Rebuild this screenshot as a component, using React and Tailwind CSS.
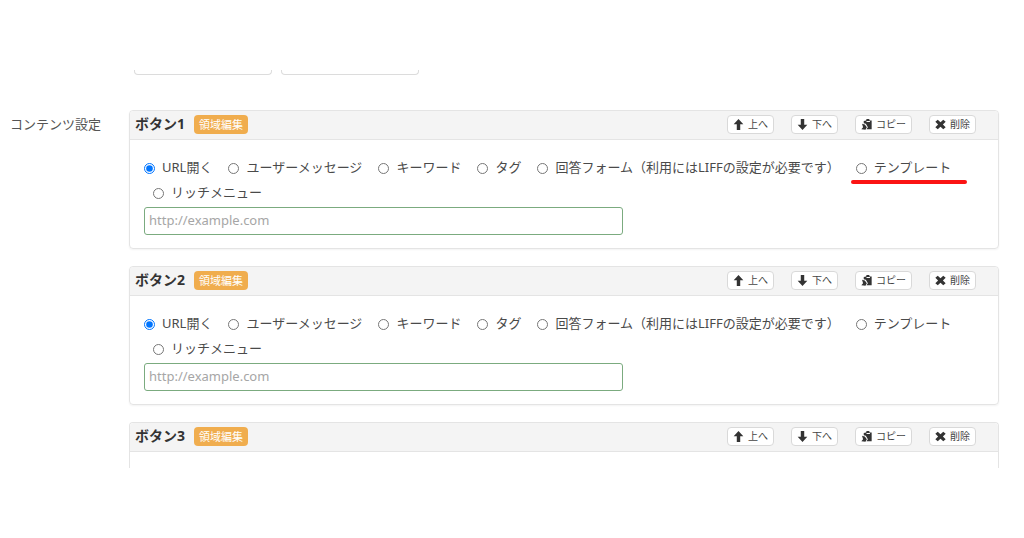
import { useState } from "react";

const ACTIONS = [
  "URL開く",
  "ユーザーメッセージ",
  "キーワード",
  "タグ",
  "回答フォーム（利用にはLIFFの設定が必要です）",
  "テンプレート",
  "リッチメニュー",
];

const ICONS = {
  up: "M8 0 L15 7.5 H10.5 V16 H5.5 V7.5 H1 Z",
  down: "M8 16 L15 8.5 H10.5 V0 H5.5 V8.5 H1 Z",
  copy: "M8 0 H12 L12.5 2 H15.5 V15 H8 L10 12 L7 7 L4 6 V3 L7.5 2 Z M8 3 V4.5 H13 V3 Z M1.5 7 L5.5 8 L8.5 12 L6.5 15.5 L0.5 15 L3 12 Z",
  remove: "M4 1 L8 4.8 L12 1 L15.5 4 L11.5 8 L15.5 12 L12 15 L8 11.2 L4 15 L0.5 12 L4.5 8 L0.5 4 Z",
};

const ToolButton = ({ icon, label }) => (
  <button
    type="button"
    className="flex h-[19px] items-center gap-1 rounded border border-[#d9d9d9] bg-white px-[5px] text-[10px] leading-none text-[#444]"
  >
    <svg viewBox="0 0 16 16" className="h-[11px] w-[11px] fill-[#333]">
      <path fillRule="evenodd" d={ICONS[icon]} />
    </svg>
    {label}
  </button>
);

const ButtonPanel = ({ id, marked, collapsed }) => {
  const [action, setAction] = useState(ACTIONS[0]);
  const [url, setUrl] = useState("");

  return (
    <section className={`border-[#e4e4e4] ${collapsed ? "rounded-t border-x border-t" : "rounded border shadow-xs"}`}>
      <header className="flex h-[29px] items-center justify-between rounded-t border-b border-[#e4e4e4] bg-[#f4f4f4] pr-[22px] pb-[2px] pl-[5px]">
        <div className="flex items-center gap-[9px]">
          <h2 className="text-[14px] leading-none font-bold text-[#333]">ボタン{id}</h2>
          <button type="button" className="h-[19px] rounded bg-[#f0ad4e] px-[5px] text-[11px] leading-none text-white">
            領域編集
          </button>
        </div>
        <div className="flex gap-[17px]">
          <ToolButton icon="up" label="上へ" />
          <ToolButton icon="down" label="下へ" />
          <ToolButton icon="copy" label="コピー" />
          <ToolButton icon="remove" label="削除" />
        </div>
      </header>

      {collapsed ? (
        <div className="h-4" />
      ) : (
        <div className="px-[14px] pt-[15px] pb-[13px]">
          <div className="mb-[2px] flex flex-wrap gap-x-[7px]">
            {ACTIONS.map((name, i) => (
              <label
                key={name}
                className={`relative flex h-[25px] items-center gap-[7px] whitespace-nowrap ${i > 0 ? "pl-[9px]" : ""}`}
              >
                <input
                  type="radio"
                  name={`action-${id}`}
                  checked={action === name}
                  onChange={() => setAction(name)}
                  className="mt-[2px] h-[11px] w-[11px]"
                />
                {name}
                {marked === name && (
                  <span className="absolute -right-4 -bottom-1 left-1 h-[4px] rounded-full bg-[#fb1414]" />
                )}
              </label>
            ))}
          </div>
          <input
            type="text"
            aria-label={`ボタン${id} URL`}
            placeholder="http://example.com"
            value={url}
            onChange={(e) => setUrl(e.target.value)}
            className="block h-[28px] w-[57%] rounded-[3px] border border-[#7bab7f] px-1 pb-[2px] placeholder:text-[#a6a6a6]"
          />
        </div>
      )}
    </section>
  );
};

const App = () => (
  <main className="bg-white pt-[70px] pr-[25px] pb-[70px] pl-[10px] font-['Noto_Sans','Noto_Sans_CJK_JP',sans-serif] text-[13px] text-[#4a4a4a]">
    <div className="flex gap-[9px] pl-[124px]">
      <div className="h-[5px] w-[138px] rounded-b border-x border-b border-[#dcdcdc]" />
      <div className="h-[5px] w-[138px] rounded-b border-x border-b border-[#dcdcdc]" />
    </div>
    <div className="mt-[35px] flex">
      <div className="w-[119px] shrink-0 pt-[5px] text-[#555]">コンテンツ設定</div>
      <div className="flex min-w-0 flex-1 flex-col gap-[17px]">
        <ButtonPanel id={1} marked="テンプレート" />
        <ButtonPanel id={2} />
        <ButtonPanel id={3} collapsed />
      </div>
    </div>
  </main>
);

export default App;
